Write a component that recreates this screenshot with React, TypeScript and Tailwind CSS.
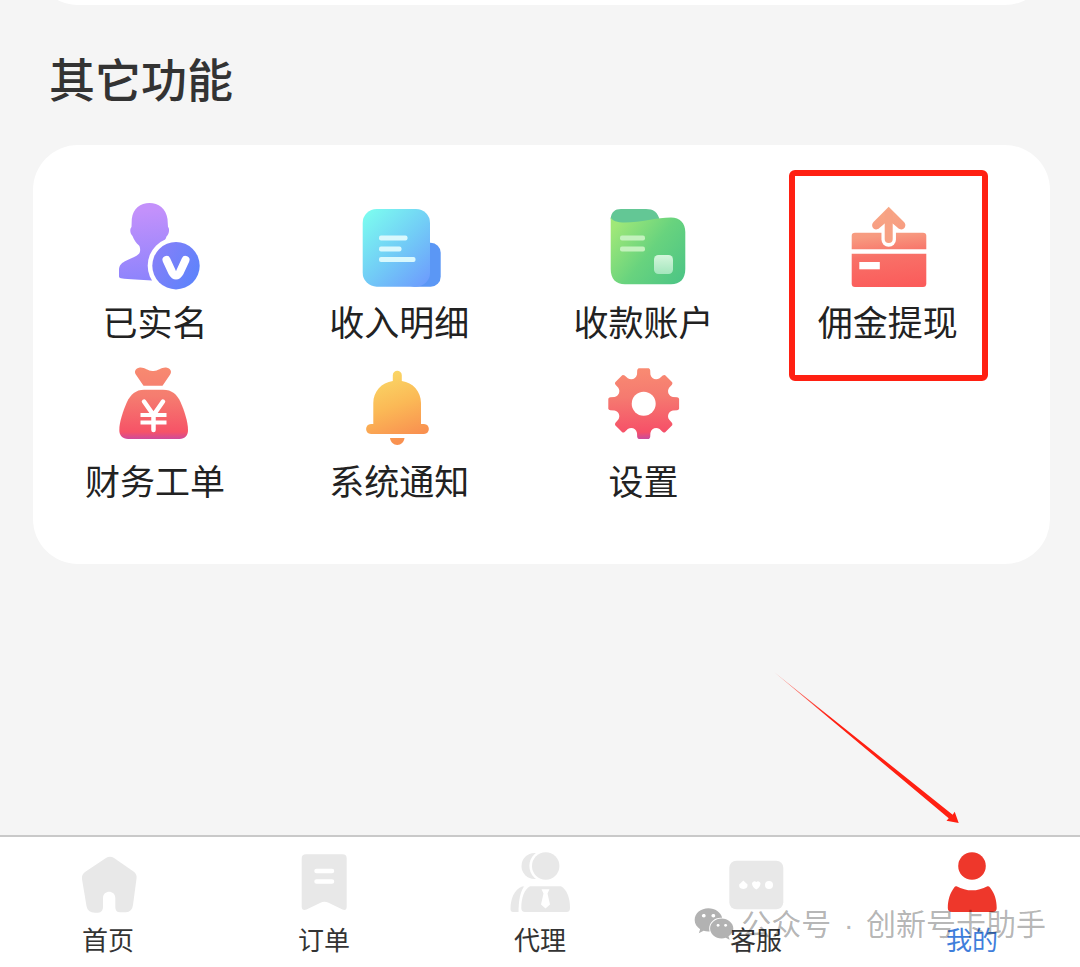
import React from 'react';
import { FaWeixin } from 'react-icons/fa';

interface MenuItem {
  label: string;
  icon: React.ReactNode;
  highlighted?: boolean;
}

interface TabItem {
  label: string;
  icon: React.ReactNode;
  active?: boolean;
}

// Outline of an eight-toothed cog around (cx, cy)
const cogPath = (cx: number, cy: number): string => {
  const at = (deg: number, r: number) => {
    const rad = (deg * Math.PI) / 180;
    return `${(cx + r * Math.cos(rad)).toFixed(1)} ${(cy + r * Math.sin(rad)).toFixed(1)}`;
  };
  let d = '';
  for (let i = 0; i < 8; i++) {
    const a = i * 45;
    d += `${i === 0 ? 'M' : 'L'}${at(a - 11, 34)} Q${at(a - 10, 35.5)} ${at(a - 8, 35.7)} L${at(a + 8, 35.7)} Q${at(a + 10, 35.5)} ${at(a + 11, 34)} L${at(a + 13, 30)} C${at(a + 17, 26)} ${at(a + 28, 26)} ${at(a + 32, 30)} `;
  }
  return d + 'Z';
};

const MenuSvg = ({ children }: { children: React.ReactNode }) => (
  <svg viewBox="0 0 90 90" className="h-[90px] w-[90px]" fill="none" aria-hidden="true">
    {children}
  </svg>
);

const TabSvg = ({ children }: { children: React.ReactNode }) => (
  <svg viewBox="0 0 64 64" className="h-16 w-16" fill="#e8e8e8" aria-hidden="true">
    {children}
  </svg>
);

const VerifiedIcon = () => (
  <MenuSvg>
    <defs>
      <linearGradient id="verified" gradientUnits="userSpaceOnUse" x1="38" y1="0" x2="46" y2="80">
        <stop offset="0.1" stopColor="#c391fb" />
        <stop offset="1" stopColor="#8b83fc" />
      </linearGradient>
      <linearGradient id="verifiedBadge" x1="0" y1="0" x2="1" y2="0.6">
        <stop stopColor="#8b7ff8" />
        <stop offset="1" stopColor="#5f83fb" />
      </linearGradient>
    </defs>
    <path
      d="M39.5 1C48.5 1 56 6.500 57.500 17L58 25C60 27 59 32 56.500 34.500C54.500 40 53 42.500 51 44.500V56L42 78.500C31 78 19 77.500 11 76.300C9.500 76 9 75.500 9 74V68C9 63 12 60.500 16.500 58.500C22 56 27 54 29.200 51.500C30.500 49.500 30.500 45.500 29 43.500C26 41 24 38 22.500 34C20 31.500 19.500 27 21.500 25L21.800 17C23 6.500 30.500 1 39.500 1Z"
      fill="url(#verified)"
    />
    <circle cx="66" cy="63.700" r="28.300" fill="#fff" />
    <circle cx="66" cy="63.700" r="23.700" fill="url(#verifiedBadge)" />
    <path d="M56.500 58L62 70Q66 77 70 70L75.500 58" stroke="#fff" strokeWidth="8" strokeLinecap="round" />
  </MenuSvg>
);

const IncomeIcon = () => (
  <MenuSvg>
    <defs>
      <linearGradient id="income" x1="0.1" y1="0.050" x2="0.9" y2="1">
        <stop stopColor="#7bf9f0" />
        <stop offset="0.5" stopColor="#72cdf6" />
        <stop offset="1" stopColor="#6d9dfd" />
      </linearGradient>
    </defs>
    <rect x="50" y="40.700" width="36.700" height="44" rx="10" fill="#5b97f5" />
    <rect x="8.700" y="7" width="67.300" height="77.700" rx="14" fill="url(#income)" />
    <g fill="#d9f8fd">
      <rect x="25" y="33.500" width="28.500" height="5" rx="2" />
      <rect x="25" y="44.500" width="22.500" height="5" rx="2" />
      <rect x="25" y="55" width="36.500" height="5" rx="2" />
    </g>
  </MenuSvg>
);

const AccountIcon = () => (
  <MenuSvg>
    <defs>
      <linearGradient id="account" x1="0" y1="0.2" x2="1" y2="0.9">
        <stop stopColor="#a0e878" />
        <stop offset="0.5" stopColor="#68d37e" />
        <stop offset="1" stopColor="#4dc585" />
      </linearGradient>
      <linearGradient id="accountChip" x1="0" y1="0" x2="0" y2="1">
        <stop stopColor="#d4f6dc" />
        <stop offset="1" stopColor="#a4e6bd" />
      </linearGradient>
    </defs>
    <path d="M11.700 17C12 10 16 7 22 7H47C54 7 59 10 60.500 18L40 26H20Z" fill="#63c795" />
    <path
      d="M11.700 15C13 19 18 20.500 26 20.500C42 20.500 58 15.500 72 15.500C81 15.500 86.300 21 86.300 30V67C86.300 77 81 82.300 72 82.300H26C17 82.300 11.700 77 11.700 67Z"
      fill="url(#account)"
    />
    <rect x="21" y="33.500" width="25" height="5" rx="2" fill="#c3f2bd" />
    <rect x="21" y="44.500" width="25" height="5" rx="2" fill="#c3f2bd" />
    <rect x="55" y="53" width="19" height="19" rx="4.500" fill="url(#accountChip)" />
  </MenuSvg>
);

const WithdrawIcon = () => (
  <MenuSvg>
    <defs>
      <linearGradient id="withdraw" gradientUnits="userSpaceOnUse" x1="42" y1="5" x2="50" y2="85">
        <stop stopColor="#f8a886" />
        <stop offset="0.35" stopColor="#f79a80" />
        <stop offset="0.6" stopColor="#f87168" />
        <stop offset="1" stopColor="#fb5c5b" />
      </linearGradient>
    </defs>
    <path d="M12 30.700H80Q83.300 30.700 83.300 34V47.300H8.700V34Q8.700 30.700 12 30.700Z" fill="url(#withdraw)" />
    <path d="M8.700 51.700H83.300V81.500Q83.300 85 80 85H12Q8.700 85 8.700 81.500Z" fill="url(#withdraw)" />
    <path d="M45.700 28V37.500" stroke="#fff" strokeWidth="14.500" strokeLinecap="round" />
    <path
      d="M45.700 4.700L61 20C65 24.500 59.500 30 55 26L49.700 21.500H41.700L36.400 26C32 30 26.500 24.500 30.500 20Z"
      fill="url(#withdraw)"
    />
    <path d="M45.700 12V37" stroke="#f7a183" strokeWidth="8" strokeLinecap="round" />
    <rect x="16.300" y="60" width="20.500" height="7.300" fill="#fff" />
  </MenuSvg>
);

const MoneyBagIcon = () => (
  <MenuSvg>
    <defs>
      <linearGradient id="bag" gradientUnits="userSpaceOnUse" x1="43" y1="6" x2="43" y2="78">
        <stop stopColor="#f88a70" />
        <stop offset="0.4" stopColor="#f57d70" />
        <stop offset="0.9" stopColor="#f65367" />
        <stop offset="1" stopColor="#cf4a9a" />
      </linearGradient>
    </defs>
    <path
      d="M29 6.800C34 5.500 38 10.500 43 10C48 10.500 52 5.500 57 6.800C61.500 8 62 11.500 59.500 14.500L52.500 24.700H33.500L26.500 14.500C24 11.500 24.500 8 29 6.800Z"
      fill="url(#bag)"
    />
    <path
      d="M34 28.700H53C62 28.700 67 33.500 70.500 41C74.500 50 78 61 78 69C78 74.500 75 78 69.500 78H18C12.500 78 9.300 74.500 9.300 69C9.300 61 13 50 17 41C20.500 33.500 26 28.700 34 28.700Z"
      fill="url(#bag)"
    />
    <path d="M34 40.500L43.500 54L53 40.500M43.500 54V69" stroke="#fff" strokeWidth="4.500" strokeLinecap="round" />
    <path d="M30.500 54H56.500M30.500 61.500H56.500" stroke="#fff" strokeWidth="4" />
  </MenuSvg>
);

const BellIcon = () => (
  <MenuSvg>
    <defs>
      <linearGradient id="bell" gradientUnits="userSpaceOnUse" x1="30" y1="12" x2="56" y2="84">
        <stop stopColor="#fad766" />
        <stop offset="0.45" stopColor="#fbb956" />
        <stop offset="0.9" stopColor="#f99150" />
      </linearGradient>
    </defs>
    <path
      d="M38.800 20V14.200C38.800 8.200 47.800 8.200 47.800 14.200V20C59 21.500 67 30.500 67 42V63H70C76.500 63 76.500 73 70 73H17C10.500 73 10.500 63 17 63H19.300V42C19.300 30.500 27.500 21.500 38.800 20Z"
      fill="url(#bell)"
    />
    <path d="M36 77H50.500C50 81 47 84 43.300 84C39.500 84 36.500 81 36 77Z" fill="url(#bell)" />
  </MenuSvg>
);

const SettingsIcon = () => (
  <MenuSvg>
    <defs>
      <linearGradient id="cog" gradientUnits="userSpaceOnUse" x1="44" y1="7" x2="47" y2="78">
        <stop stopColor="#f98b72" />
        <stop offset="0.4" stopColor="#f57a70" />
        <stop offset="0.9" stopColor="#f65068" />
        <stop offset="1" stopColor="#c94b9e" />
      </linearGradient>
    </defs>
    <path d={cogPath(44.7, 42.7)} fill="url(#cog)" />
    <circle cx="44.700" cy="42.700" r="12" fill="#fff" />
  </MenuSvg>
);

const HomeIcon = () => (
  <TabSvg>
    <path d="M30 7Q34 4.500 38 7L57.500 20.500Q61 23 60.600 27L57 54Q56 61 50 61.300H44Q39.300 61.300 39.300 56V47C39.300 38.500 27 38.500 27 47V56Q27 61.300 22 61.700H19Q11.500 61.500 10.500 55L6 28Q5.500 23.500 9 21Z" />
  </TabSvg>
);

const OrderIcon = () => (
  <TabSvg>
    <path d="M14 3.300H50.500Q54.700 3.300 54.700 7.500V56Q54.500 60 50.500 58.500L36 51.500Q32 50 28 52L14.500 58.500Q10 60 9.700 56V7.500Q9.700 3.300 14 3.300Z" />
    <path d="M24.500 20H40M24.500 30.500H40" stroke="#fff" strokeWidth="4.500" strokeLinecap="round" />
  </TabSvg>
);

const AgentIcon = () => (
  <TabSvg>
    <circle cx="26.500" cy="15" r="13" />
    <path d="M14 35.500H34V61H5Q2.500 61 2.500 58C2.500 48 6 39 14 35.500Z" />
    <circle cx="37.700" cy="15" r="16.300" fill="#fff" />
    <path d="M18 33H36V62H10.500C10.500 50 12 39 18 33Z" fill="#fff" />
    <circle cx="37.700" cy="15" r="13.700" />
    <path d="M22 35.300H53C59 39 62 47 62 57Q62 61 58.500 61H17Q13.300 61 13.300 57C13.300 47 16 39 22 35.300Z" />
    <path d="M33.500 38.300H41.500L39.500 42.500L42 53.500L37.500 57.500L33 53.500L35.500 42.500Z" fill="#fff" />
  </TabSvg>
);

const ServiceIcon = () => (
  <TabSvg>
    <rect x="5.300" y="9.700" width="54" height="48.600" rx="7" />
    <g fill="#fff">
      <path d="M19.300 29.500L23.500 33.500Q24 37.500 19.300 38Q14.500 37.500 15.200 33.500Z" />
      <path d="M28 32Q30 29 32.300 31Q34.500 29 36.500 32Q36.500 36 32.300 38.500Q28 36 28 32Z" />
      <circle cx="45" cy="34" r="4" />
    </g>
  </TabSvg>
);

const MineIcon = () => (
  <TabSvg>
    <g fill="#ee372b">
      <circle cx="32" cy="15" r="13.800" />
      <path d="M16.500 35.200Q32 43.500 47.500 35.200Q49 35 50 36.500C54.500 42 56.700 49 56.700 57Q56.700 61 52.500 61H12Q7.800 61 7.800 57C7.800 49 10 42 14.200 36.500Q15 35 16.500 35.200Z" />
    </g>
  </TabSvg>
);

const menuItems: MenuItem[] = [
  { label: '已实名', icon: <VerifiedIcon /> },
  { label: '收入明细', icon: <IncomeIcon /> },
  { label: '收款账户', icon: <AccountIcon /> },
  { label: '佣金提现', icon: <WithdrawIcon />, highlighted: true },
  { label: '财务工单', icon: <MoneyBagIcon /> },
  { label: '系统通知', icon: <BellIcon /> },
  { label: '设置', icon: <SettingsIcon /> },
];

const tabs: TabItem[] = [
  { label: '首页', icon: <HomeIcon /> },
  { label: '订单', icon: <OrderIcon /> },
  { label: '代理', icon: <AgentIcon /> },
  { label: '客服', icon: <ServiceIcon /> },
  { label: '我的', icon: <MineIcon />, active: true },
];

const PointerArrow = () => (
  <svg
    viewBox="0 0 190 157"
    className="pointer-events-none absolute right-[120px] bottom-full mb-2.5 h-[157px] w-[190px]"
    aria-hidden="true"
  >
    <defs>
      <linearGradient id="pointer" gradientUnits="userSpaceOnUse" x1="4" y1="2" x2="60" y2="48">
        <stop stopColor="#ff2012" stopOpacity="0.4" />
        <stop offset="1" stopColor="#ff2012" />
      </linearGradient>
    </defs>
    <path d="M4 2L182.700 144.700L184.700 141.700L188.700 153L176.500 150.700L178.700 148.300Z" fill="url(#pointer)" />
  </svg>
);

export default function App() {
  return (
    <div className="flex min-h-screen flex-col bg-[#f5f5f5] font-['Noto_Sans_CJK_SC',sans-serif]">
      <main className="flex-1 pr-[30px] pb-8 pl-[33px]">
        {/* Bottom edge of the card scrolled off above */}
        <div className="flex h-[5px] items-end overflow-hidden">
          <div className="h-24 w-full shrink-0 rounded-b-[45px] bg-white" />
        </div>

        <h2 className="mt-[42px] pl-4 text-[46px] leading-[60px] font-medium text-[#333]">其它功能</h2>

        <section className="mt-[38px] grid grid-cols-4 gap-y-4 rounded-[45px] bg-white pt-[57px] pr-10 pb-[60px]">
          {menuItems.map((item) => (
            <button key={item.label} type="button" className="relative flex cursor-pointer flex-col items-center gap-[5px]">
              {item.icon}
              <span className="text-[35px] leading-12 text-[#222]">{item.label}</span>
              {item.highlighted && (
                <span className="absolute -top-8 right-[22px] -bottom-9 left-[23px] rounded-md border-[6px] border-[#ff2012]" />
              )}
            </button>
          ))}
        </section>
      </main>

      <nav className="relative grid grid-cols-5 border-t-2 border-[#c9c9c9] bg-white pt-3.5 pb-2.5">
        {tabs.map((tab) => (
          <a key={tab.label} href="#" className="flex flex-col items-center gap-1.5">
            {tab.icon}
            <span className={`text-[26px] leading-9 ${tab.active ? 'text-[#3f7edb]' : 'text-[#333]'}`}>{tab.label}</span>
          </a>
        ))}

        <PointerArrow />

        {/* Account watermark */}
        <div className="pointer-events-none absolute top-[67px] right-[34px] flex items-center gap-1.5 text-black/30">
          <FaWeixin className="h-9 w-[42px]" />
          <p className="text-[30px] leading-9 whitespace-nowrap">
            公众号
            <span className="mx-1 font-['Liberation_Sans',sans-serif]"> · </span>
            创新号卡助手
          </p>
        </div>
      </nav>
    </div>
  );
}
